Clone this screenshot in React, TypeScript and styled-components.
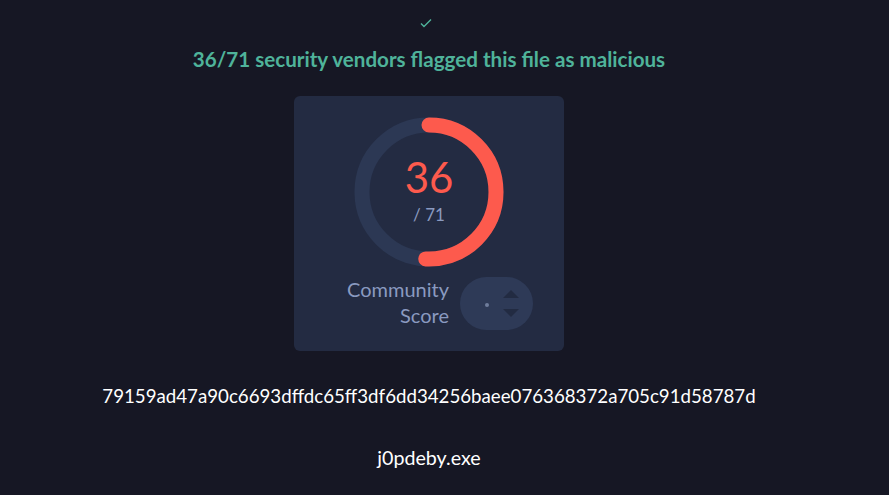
import React from "react";
import styled, { createGlobalStyle } from "styled-components";

const GlobalStyle = createGlobalStyle`
  html, body {
    margin: 0;
    padding: 0;
    background: #161724;
  }
  body {
    font-family: "Source Sans Pro", Lato, "Noto Sans", sans-serif;
  }
`;

const RADIUS = 67;
const CIRC = 2 * Math.PI * RADIUS;

const ScoreRing = ({ positives, total }: { positives: number; total: number }) => {
  const dash = (positives / total) * CIRC;
  return (
    <RingSvg width="150" height="150" viewBox="0 0 150 150">
      <circle cx="75" cy="75" r={RADIUS} fill="none" stroke="#2c3854" strokeWidth="15" />
      <circle
        cx="75"
        cy="75"
        r={RADIUS}
        fill="none"
        stroke="#fd5a4d"
        strokeWidth="15"
        strokeLinecap="round"
        strokeDasharray={`${dash} ${CIRC}`}
        transform="rotate(-90 75 75)"
      />
    </RingSvg>
  );
};

export default function App() {
  return (
    <>
      <GlobalStyle />
      <Page>
        <Check viewBox="0 0 16 16">
          <path d="M3 8.5l3 3 7-7" fill="none" stroke="#4fb39a" strokeWidth="1.4" />
        </Check>
        <Headline>36/71 security vendors flagged this file as malicious</Headline>
        <Card>
          <RingWrap>
            <ScoreRing positives={36} total={71} />
            <RingCenter>
              <Positives>36</Positives>
              <Total>/ 71</Total>
            </RingCenter>
          </RingWrap>
          <CommunityRow>
            <CommunityLabel>
              Community
              <br />
              Score
            </CommunityLabel>
            <VotePill>
              <Dot />
              <Arrows>
                <svg width="16" height="8" viewBox="0 0 16 8">
                  <path d="M0 8L8 0L16 8Z" fill="#222b42" />
                </svg>
                <svg width="16" height="8" viewBox="0 0 16 8">
                  <path d="M0 0L8 8L16 0Z" fill="#222b42" />
                </svg>
              </Arrows>
            </VotePill>
          </CommunityRow>
        </Card>
        <Hash>79159ad47a90c6693dffdc65ff3df6dd34256baee076368372a705c91d58787d</Hash>
        <FileName>j0pdeby.exe</FileName>
      </Page>
    </>
  );
}

const Page = styled.div`
  width: 858px;
  height: 495px;
  display: flex;
  flex-direction: column;
  align-items: center;
  padding-top: 15px;
  box-sizing: border-box;
`;

const Check = styled.svg`
  width: 16px;
  height: 16px;
  margin-left: -6px;
`;

const Headline = styled.div`
  margin-top: 15px;
  font-size: 20.6px;
  font-weight: 700;
  color: #4fb39a;
  line-height: 26px;
`;

const Card = styled.div`
  margin-top: 24px;
  width: 270px;
  height: 255px;
  background: #232b42;
  border-radius: 6px;
  display: flex;
  flex-direction: column;
  align-items: center;
  padding-top: 21px;
  box-sizing: border-box;
`;

const RingWrap = styled.div`
  position: relative;
  width: 150px;
  height: 150px;
`;

const RingSvg = styled.svg`
  display: block;
`;

const RingCenter = styled.div`
  position: absolute;
  inset: 0;
  display: flex;
  flex-direction: column;
  align-items: center;
  justify-content: center;
`;

const Positives = styled.div`
  font-size: 42px;
  line-height: 44px;
  color: #fd5a4d;
  margin-top: -4px;
`;

const Total = styled.div`
  font-size: 17px;
  line-height: 22px;
  color: #8a9ac0;
  margin-top: 5px;
`;

const CommunityRow = styled.div`
  display: flex;
  align-items: center;
  gap: 11px;
  margin-top: 10px;
  margin-left: 22px;
`;

const CommunityLabel = styled.div`
  font-size: 20px;
  line-height: 26px;
  color: #8a9ac0;
  text-align: right;
  margin-top: -4px;
`;

const VotePill = styled.div`
  width: 73px;
  height: 53px;
  border-radius: 27px;
  background: #2e3a57;
  display: flex;
  align-items: center;
  padding-left: 25px;
  box-sizing: border-box;
`;

const Dot = styled.div`
  width: 4px;
  height: 4px;
  border-radius: 50%;
  background: #6f7d9c;
  margin-top: 2px;
`;

const Arrows = styled.div`
  display: flex;
  flex-direction: column;
  gap: 11px;
  margin-left: 14px;
  svg {
    display: block;
  }
`;

const Hash = styled.div`
  margin-top: 33px;
  font-size: 18.7px;
  line-height: 24px;
  color: #ffffff;
`;

const FileName = styled.div`
  margin-top: 38px;
  font-size: 19.7px;
  line-height: 24px;
  color: #ffffff;
`;
